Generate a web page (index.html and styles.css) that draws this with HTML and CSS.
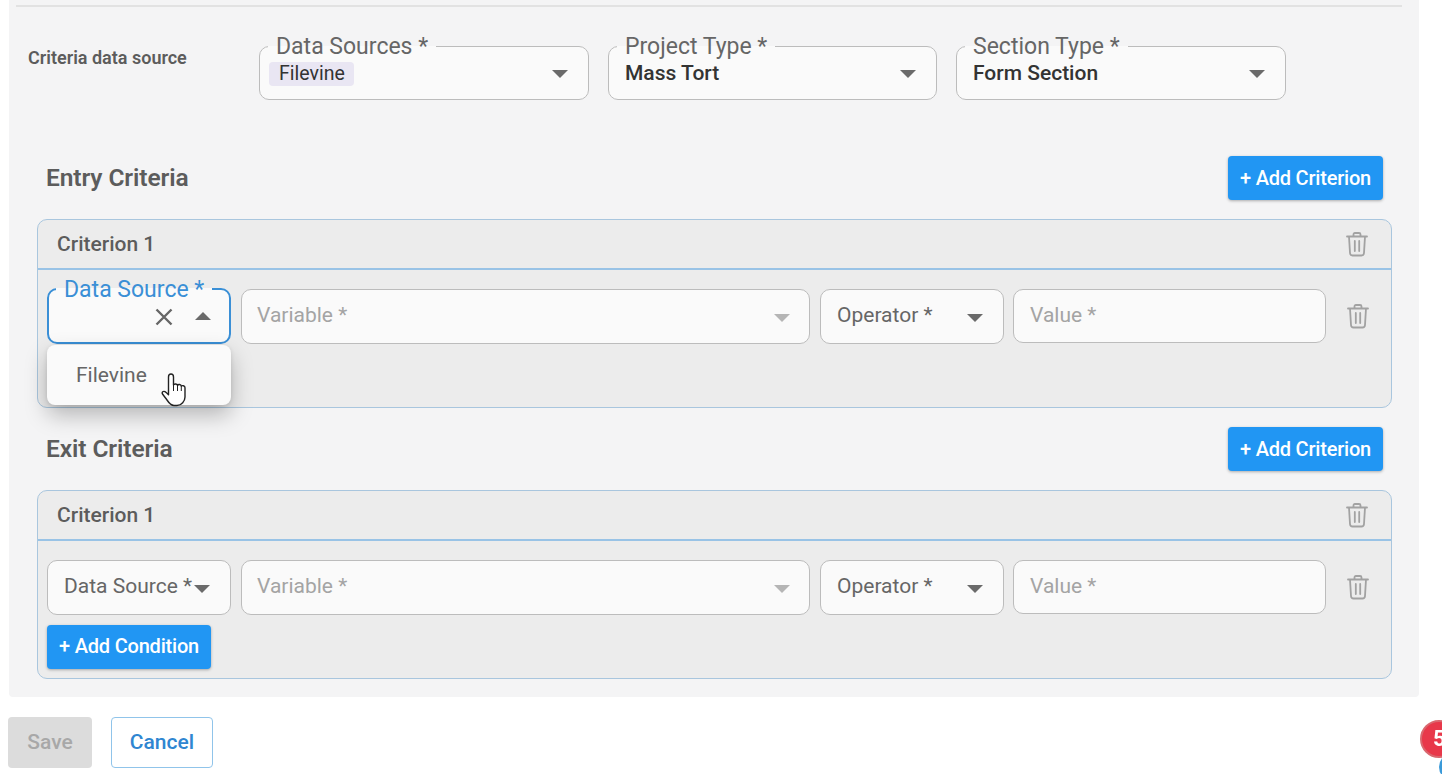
FILE: index.html
```html
<!DOCTYPE html>
<html lang="en">
<head>
<meta charset="utf-8">
<title>Criteria</title>
<link rel="stylesheet" href="styles.css">
</head>
<body>
<svg class="defs" width="0" height="0" aria-hidden="true">
  <symbol id="trash" viewBox="0 0 22 25">
    <path d="M1 4.500h20M7.500 4.500V2.500Q7.500 1 9 1h4Q14.500 1 14.500 2.500V4.500M3 4.500l1 16.500c.1 1.800 1 2.500 2.500 2.500h9c1.500 0 2.400-.7 2.500-2.500l1-16.500M8.800 9v10M13.200 9v10" fill="none" stroke="currentColor" stroke-width="1.800" stroke-linecap="round" stroke-linejoin="round"/>
  </symbol>
  <symbol id="down" viewBox="0 0 16 8"><path d="M0 0h16L8 8z" fill="currentColor"/></symbol>
  <symbol id="up" viewBox="0 0 16 8"><path d="M0 8h16L8 0z" fill="currentColor"/></symbol>
</svg>

<main class="panel">
  <div class="rule"></div>

  <section class="source-row">
    <div class="source-label">Criteria data source</div>
    <fieldset class="field notched wide">
      <legend>Data Sources *</legend>
      <span class="chip">Filevine</span>
      <svg class="caret"><use href="#down"/></svg>
    </fieldset>
    <fieldset class="field notched wide narrow">
      <legend>Project Type *</legend>
      <span class="value">Mass Tort</span>
      <svg class="caret"><use href="#down"/></svg>
    </fieldset>
    <fieldset class="field notched wide">
      <legend>Section Type *</legend>
      <span class="value">Form Section</span>
      <svg class="caret"><use href="#down"/></svg>
    </fieldset>
  </section>

  <div class="heading-row first">
    <h2>Entry Criteria</h2>
    <button class="btn">+ Add Criterion</button>
  </div>
  <section class="card">
    <header class="card-head">
      <span>Criterion 1</span>
      <svg class="trash"><use href="#trash"/></svg>
    </header>
    <div class="card-body">
      <div class="cond-row">
        <div class="source-wrap">
          <fieldset class="field notched focus">
            <legend>Data Source *</legend>
            <svg class="clear" viewBox="0 0 18 18"><path d="M1.500 1.500l15 15M16.500 1.500l-15 15" fill="none" stroke="currentColor" stroke-width="2.400"/></svg>
            <svg class="caret up"><use href="#up"/></svg>
          </fieldset>
          <div class="menu">
            <div class="menu-item">Filevine</div>
          </div>
          <svg class="hand" viewBox="0 0 26 34">
            <path d="M7.500 20V4C7.500 2 8.600 1 10 1s2.500 1 2.500 3V12c.5-1.400 3.600-1.500 4 .4.600-1.300 3.500-1.200 3.800.8.700-1 3.700-.8 3.700 1.600V24c0 4-3.500 8.500-8 8.500h-3c-3 0-5-2.500-7-5.500-1.800-2.500-3.500-4.500-4.500-6-1-1.700.8-3.300 2.500-2.300 1.200.7 2.500 2 3.500 3z" fill="#fff" stroke="#222" stroke-width="1.400" stroke-linejoin="round"/>
            <path d="M12.500 12v6M16.500 12.400V18M20.300 13.200V18" fill="none" stroke="#222" stroke-width="1"/>
          </svg>
        </div>
        <div class="field variable"><span class="placeholder">Variable *</span><svg class="caret faint"><use href="#down"/></svg></div>
        <div class="field operator"><span class="label">Operator *</span><svg class="caret"><use href="#down"/></svg></div>
        <div class="field val"><span class="placeholder">Value *</span></div>
        <svg class="trash row-trash"><use href="#trash"/></svg>
      </div>
    </div>
  </section>

  <div class="heading-row">
    <h2>Exit Criteria</h2>
    <button class="btn">+ Add Criterion</button>
  </div>
  <section class="card">
    <header class="card-head">
      <span>Criterion 1</span>
      <svg class="trash"><use href="#trash"/></svg>
    </header>
    <div class="card-body">
      <div class="cond-row">
        <div class="field source"><span class="label">Data Source *</span><svg class="caret"><use href="#down"/></svg></div>
        <div class="field variable"><span class="placeholder">Variable *</span><svg class="caret faint"><use href="#down"/></svg></div>
        <div class="field operator"><span class="label">Operator *</span><svg class="caret"><use href="#down"/></svg></div>
        <div class="field val"><span class="placeholder">Value *</span></div>
        <svg class="trash row-trash"><use href="#trash"/></svg>
      </div>
      <button class="btn cond">+ Add Condition</button>
    </div>
  </section>
</main>

<footer class="actions">
  <button class="save">Save</button>
  <button class="cancel">Cancel</button>
</footer>

<div class="chat-badge"><span>5</span></div>
<div class="chat-tail"></div>
</body>
</html>
```
FILE: styles.css
```css
* { box-sizing: border-box; }
html, body { height: 100%; }
body {
  margin: 0;
  background: #fff;
  color: #5c5c5c;
  font-family: Roboto, "Liberation Sans", sans-serif;
  overflow: hidden;
}
.defs { display: block; height: 0; }

.panel {
  margin-left: 9px;
  width: 1410px;
  height: 697px;
  background: #f4f4f5;
  padding-top: 5px;
  border-radius: 0 0 4px 4px;
}
.rule {
  margin-left: 7px;
  width: 1386px;
  height: 2px;
  background: #e2e2e2;
}

.source-row {
  display: flex;
  gap: 19px;
  margin-top: 27px;
  padding-left: 19px;
  align-items: flex-start;
}
.source-label {
  width: 212px;
  margin-top: 13px;
  font-size: 18px;
  line-height: 21px;
  font-weight: 600;
  white-space: nowrap;
}

.field {
  position: relative;
  margin: 0;
  background: #fafafa;
  border: 1px solid #bcbcbc;
  border-radius: 10px;
  display: flex;
  align-items: center;
  font-size: 21px;
  min-width: 0;
}
fieldset.field { display: block; padding: 0; }
.notched legend {
  position: relative;
  top: 1px;
  margin-left: 8px;
  padding: 0 8px;
  font-size: 23px;
  line-height: 24px;
  color: #666;
  white-space: nowrap;
}
.wide { width: 330px; height: 66px; }
.narrow { width: 329px; }

.chip {
  position: absolute;
  left: 9px;
  top: 4px;
  width: 85px;
  height: 24px;
  padding-left: 10px;
  background: #e9e6f3;
  border-radius: 4px;
  color: #333;
  font-size: 19.500px;
  line-height: 24px;
}
.value {
  position: absolute;
  left: 16px;
  top: 3px;
  font-size: 21px;
  line-height: 24px;
  font-weight: 500;
  color: #333;
}
.caret {
  position: absolute;
  right: 20px;
  top: 50%;
  width: 16px;
  height: 8px;
  margin-top: -3px;
  color: #6a6a6a;
}
.wide .caret { top: 12px; margin-top: 0; right: 20px; }
.caret.faint { color: #b5b5b5; right: 19px; }

.heading-row {
  display: flex;
  justify-content: space-between;
  align-items: center;
  margin: 19px 36px 19px 37px;
}
.heading-row.first { margin-top: 56px; }
h2 {
  margin: 0;
  font-size: 24.500px;
  line-height: 44px;
  font-weight: 600;
  color: #5c5c5c;
  letter-spacing: -0.1px;
}

.btn {
  height: 44px;
  width: 155px;
  padding: 0;
  border: 0;
  border-radius: 4px;
  background: #2196f3;
  color: #fff;
  font: 500 20px/44px Roboto, sans-serif;
  letter-spacing: -0.2px;
  white-space: nowrap;
  box-shadow: 0 1px 3px rgba(0, 0, 0, .3);
}
.btn.cond { display: block; width: 164px; margin-top: 10px; padding-bottom: 2px; line-height: 42px; }

.card {
  margin-left: 28px;
  width: 1355px;
  height: 189px;
  background: #ececec;
  border: 1px solid #a9c6de;
  border-radius: 10px;
}
.card-head {
  height: 50px;
  padding: 0 23px 0 19px;
  display: flex;
  align-items: center;
  justify-content: space-between;
  border-bottom: 2px solid #99c3e6;
  font-size: 21px;
  font-weight: 500;
  color: #5c5c5c;
}
.trash {
  width: 22px;
  height: 25px;
  color: #a2a2a2;
  flex: none;
}
.card-body { padding: 19px 9px 9px; }
.cond-row {
  display: flex;
  align-items: flex-start;
  gap: 10px;
  height: 55px;
}
.row-trash { margin: 15px 0 0 11px; }

.source-wrap { position: relative; width: 184px; height: 55px; flex: none; }
.source { width: 184px; height: 55px; flex: none; padding-left: 16px; }
.variable { width: 569px; height: 55px; flex: none; padding-left: 15px; }
.operator { width: 184px; height: 55px; flex: none; padding-left: 16px; }
.val { width: 313px; height: 54px; flex: none; padding-left: 16px; margin-left: -1px; }
.label { color: #666; white-space: nowrap; }
.placeholder { color: #a4a4a4; }
.label, .placeholder { position: relative; top: -2px; }
.val .placeholder { top: -1px; }

.focus {
  width: 184px;
  height: 67px;
  margin-top: -12px;
  border: 2px solid #3a8fd6;
}
.notched.focus legend { color: #3a8fd6; margin-left: 7px; padding: 0 8px; }
.clear {
  position: absolute;
  left: 106px;
  top: 7px;
  width: 18px;
  height: 18px;
  color: #666;
}
.caret.up { top: 11px; right: 18px; margin-top: 0; }

.menu {
  position: absolute;
  left: 0;
  top: 56px;
  width: 184px;
  height: 60px;
  background: #fafafa;
  border-radius: 8px;
  box-shadow: 0 10px 22px rgba(0, 0, 0, .26), 0 1px 4px rgba(0, 0, 0, .1);
  z-index: 2;
}
.menu-item {
  padding: 17px 0 0 29px;
  font-size: 21px;
  line-height: 26px;
  color: #666;
}
.hand {
  position: absolute;
  left: 114px;
  top: 84px;
  width: 26px;
  height: 34px;
  z-index: 3;
}

.actions {
  display: flex;
  gap: 19px;
  margin-top: 20px;
  padding-left: 8px;
}
.save, .cancel {
  height: 51px;
  padding: 0;
  border-radius: 4px;
  font: 500 21px/49px Roboto, sans-serif;
}
.save {
  width: 84px;
  border: 0;
  background: #dcdcdc;
  color: #a8a8a8;
}
.cancel {
  width: 102px;
  background: #fff;
  border: 1px solid #90c4ea;
  color: #2f86d1;
}

.chat-badge {
  position: fixed;
  left: 1420px;
  top: 720px;
  width: 38px;
  height: 38px;
  border-radius: 50%;
  background: #e8384a;
  border: 2px solid #d9686f;
  color: #fff;
  font: 700 22px/34px Roboto, sans-serif;
  padding-left: 11px;
}
.chat-tail {
  position: fixed;
  left: 1439px;
  top: 755px;
  width: 20px;
  height: 24px;
  border-radius: 50% 0 0 50%;
  background: #3a9ad9;
}
```
